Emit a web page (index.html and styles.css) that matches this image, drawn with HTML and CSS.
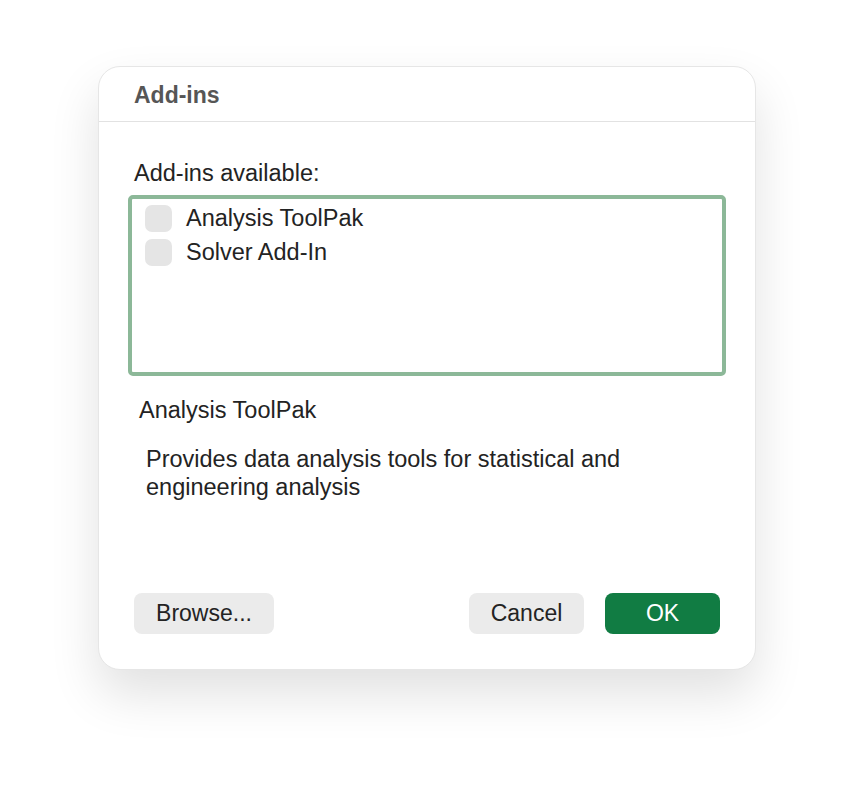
FILE: index.html
```html
<!DOCTYPE html>
<html lang="en">

<head>
  <meta charset="UTF-8">
  <title>Add-ins</title>
  <link rel="stylesheet" href="styles.css">
</head>

<body>
  <div class="dialog">
    <div class="dialog-header">
      <h1>Add-ins</h1>
    </div>

    <div class="dialog-body">
      <div class="list-label">Add-ins available:</div>

      <div class="addin-list">
        <label class="addin-row">
          <span class="check"></span>
          <span>Analysis ToolPak</span>
        </label>
        <label class="addin-row">
          <span class="check"></span>
          <span>Solver Add-In</span>
        </label>
      </div>

      <div class="addin-name">Analysis ToolPak</div>
      <p class="addin-desc">Provides data analysis tools for statistical and engineering analysis</p>

      <div class="dialog-footer">
        <button class="btn btn-browse">Browse...</button>
        <div class="footer-right">
          <button class="btn">Cancel</button>
          <button class="btn btn-primary">OK</button>
        </div>
      </div>
    </div>
  </div>
</body>

</html>
```

FILE: styles.css
```css
body {
  background-color: #fff;
  color: #232323;
  font-family: "Liberation Sans", Arial, sans-serif;
  margin: 0;
  padding-top: 66px;
  min-height: 100vh;
  box-sizing: border-box;
  display: flex;
  justify-content: center;
  align-items: flex-start;
}

.dialog {
  box-sizing: border-box;
  width: 658px;
  height: 604px;
  background-color: #fff;
  border: 1px solid #e6e6e6;
  border-radius: 22px;
  box-shadow: 0 24px 50px rgba(0, 0, 0, 0.12);
  display: flex;
  flex-direction: column;
}

.dialog-header {
  height: 54px;
  border-bottom: 1px solid #e2e2e2;
  padding: 0 35px;
}

h1 {
  margin: 0;
  padding-top: 2px;
  font-size: 23px;
  line-height: 52px;
  color: #565656;
}

.dialog-body {
  flex: 1;
  display: flex;
  flex-direction: column;
  padding: 0 35px 35px;
  font-size: 23.5px;
  line-height: 28px;
}

.list-label {
  margin-top: 37px;
}

.addin-list {
  margin: 8px -6px 0;
  height: 181px;
  box-sizing: border-box;
  border: 4px solid #8cb898;
  border-radius: 5px;
  padding: 2px 13px;
}

.addin-row {
  display: flex;
  align-items: center;
  gap: 14px;
  height: 34px;
  line-height: 34px;
}

.check {
  width: 27px;
  height: 27px;
  border-radius: 7px;
  background-color: #e5e5e5;
}

.addin-name {
  margin-top: 20px;
  padding-left: 5px;
}

.addin-desc {
  margin: 21px 0 0;
  padding-left: 12px;
  padding-right: 80px;
}

.dialog-footer {
  margin-top: auto;
  display: flex;
  justify-content: space-between;
}

.footer-right {
  display: flex;
  gap: 21px;
}

.btn {
  height: 41px;
  min-width: 115px;
  padding: 0 20px;
  border: none;
  border-radius: 8px;
  background-color: #ebebeb;
  color: #232323;
  font-family: inherit;
  font-size: 23px;
}

.btn-browse {
  min-width: 140px;
}

.btn-primary {
  background-color: #117c43;
  color: #fff;
}
```
